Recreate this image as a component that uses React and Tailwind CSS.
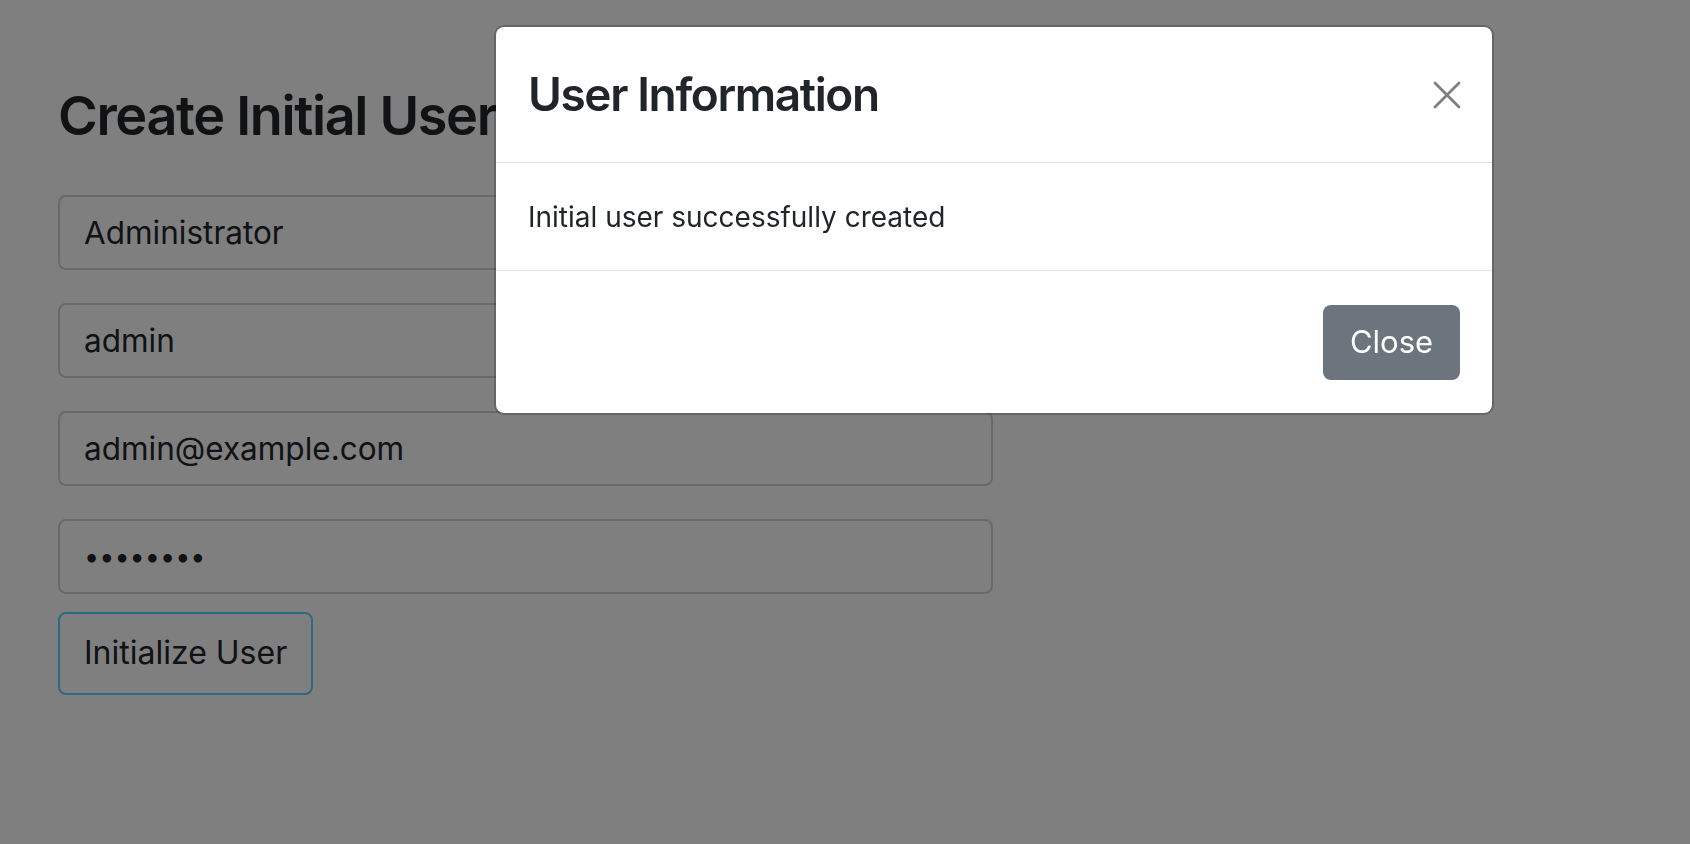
import React from 'react';

function CloseIcon() {
  return (
    <svg width="28" height="28" viewBox="0 0 28 28" fill="none">
      <path d="M2 2 L26 26 M26 2 L2 26" stroke="#000" strokeWidth="2.8" strokeLinecap="round" />
    </svg>
  );
}

export default function App() {
  const fields = [
    { type: 'text', value: 'Administrator', size: 'text-[31.5px]' },
    { type: 'text', value: 'admin', size: 'text-[31.5px]' },
    { type: 'email', value: 'admin@example.com', size: 'text-[31.5px]' },
    { type: 'password', value: 'password', size: 'text-[27px]' },
  ];

  return (
    <div className="min-h-[844px] bg-white font-['Inter',sans-serif] text-[#212529]">
      {/* Page */}
      <div className="pl-[58px] pt-[84px]">
        <h1 className="text-[54px] leading-[1.2] font-semibold tracking-[-0.025em]">Create Initial User</h1>
        <form className="mt-[46px] flex flex-col gap-[33px]">
          {fields.map((f, i) => (
            <input
              key={i}
              type={f.type}
              value={f.value}
              readOnly
              className={`w-[935px] h-[75px] border-2 border-[#ced4da] rounded-[8px] px-[24px] ${f.size} text-[#212529] bg-white outline-none`}
            />
          ))}
        </form>
        <button className="mt-[18px] h-[83px] w-[255px] border-2 border-[#5cd6ff] rounded-[8px] pl-[24px] text-left text-[32px] text-[#212529]">
          Initialize User
        </button>
      </div>

      {/* Backdrop */}
      <div className="fixed inset-0 bg-black/50" />

      {/* Modal */}
      <div className="fixed left-[494px] top-[25px] w-[1000px] bg-white border-2 border-black/20 rounded-[10px] bg-clip-padding">
        <div className="h-[136px] px-[32px] flex items-center justify-between border-b-[1.5px] border-[#dee2e6]">
          <h5 className="text-[46px] leading-[1.2] font-semibold tracking-[-0.03em]">User Information</h5>
          <button className="opacity-50 -mr-[1px]">
            <CloseIcon />
          </button>
        </div>
        <div className="h-[108px] px-[32px] flex items-center border-b-[1.5px] border-[#dee2e6]">
          <p className="text-[28px]">Initial user successfully created</p>
        </div>
        <div className="h-[142px] pr-[32px] flex items-center justify-end">
          <button className="h-[75px] w-[137px] rounded-[8px] bg-[#6c757d] text-white text-[31px]">Close</button>
        </div>
      </div>
    </div>
  );
}
